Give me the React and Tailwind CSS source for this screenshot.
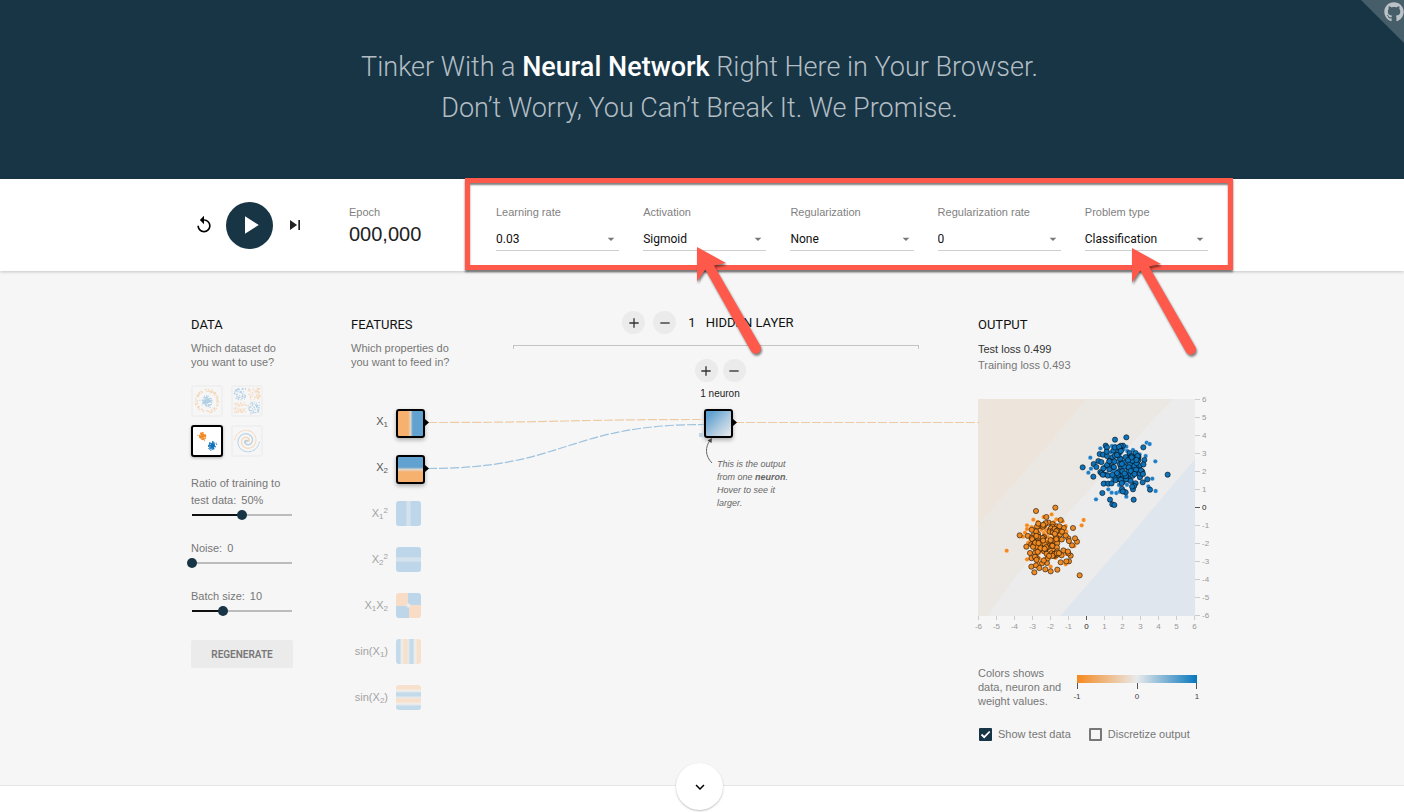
import React, { useState } from "react";
import {
  MdReplay,
  MdPlayArrow,
  MdSkipNext,
  MdAdd,
  MdRemove,
  MdArrowDropDown,
  MdKeyboardArrowDown,
} from "react-icons/md";
import { FaGithub } from "react-icons/fa";

const ORANGE = "#f08a24";
const BLUE = "#0f73b9";

function makeRandom(seed) {
  let s = seed;
  const next = () => {
    s = (s * 16807) % 2147483647;
    return s / 2147483647;
  };
  const normal = () =>
    Math.sqrt(-2 * Math.log(next())) * Math.cos(2 * Math.PI * next());
  return { next, normal };
}

/* ---------- Header ---------- */

function Header() {
  return (
    <header className="relative z-10 bg-[#183545] pt-[47px] pr-[5px] pb-[50px] shadow-[0_1px_4px_rgba(0,0,0,0.35)]">
      <h1 className="text-center text-[27px] leading-[41px] font-light text-[#b3bdc4] [font-family:Roboto,sans-serif]">
        Tinker With a <b className="font-medium text-white">Neural Network</b> Right Here in Your Browser.
        <br />
        Don’t Worry, You Can’t Break It. We Promise.
      </h1>
      <a
        href="#github"
        aria-label="Source on GitHub"
        className="absolute top-0 right-0 h-[43px] w-[43px] bg-[#465d6a] [clip-path:polygon(0_0,100%_0,100%_100%)]"
      >
        <FaGithub className="absolute top-0.5 right-0 h-5 w-5 text-[#bac2c7]" />
      </a>
    </header>
  );
}

/* ---------- Top controls ---------- */

const SELECTS = [
  { id: "rate", label: "Learning rate", options: ["0.03", "0.1", "0.3"] },
  { id: "activation", label: "Activation", options: ["Sigmoid", "ReLU", "Tanh", "Linear"] },
  { id: "reg", label: "Regularization", options: ["None", "L1", "L2"] },
  { id: "regrate", label: "Regularization rate", options: ["0", "0.001", "0.01"] },
  { id: "problem", label: "Problem type", options: ["Classification", "Regression"] },
];

function SelectField({ id, label, options }) {
  return (
    <div className="flex flex-col">
      <label htmlFor={id} className="text-[11px] leading-4 text-[#7f7f7f]">
        {label}
      </label>
      <div className="relative mt-2 border-b border-[#cfcfcf]">
        <select
          id={id}
          className="block h-[22px] w-full appearance-none bg-transparent text-xs text-[#111] [font-family:Roboto,sans-serif]"
        >
          {options.map((o) => (
            <option key={o}>{o}</option>
          ))}
        </select>
        <MdArrowDropDown className="pointer-events-none absolute top-[3px] right-0 h-4 w-4 text-[#777]" />
      </div>
    </div>
  );
}

const ARROW =
  "M0 0L29 16L17 18.500L63.300 98.700A5.300 5.300 0 0 1 54 104L8.300 22.500L0 34.500Z";

function Annotations() {
  return (
    <div aria-hidden="true" className="pointer-events-none absolute inset-0 z-20">
      <div className="absolute -top-px -right-[25px] bottom-px left-[274px] border-[5px] border-[#ff594b] shadow-[0_2px_2px_rgba(0,0,0,0.55),inset_0_2px_2px_rgba(0,0,0,0.5)]" />
      <svg
        width="1020"
        height="190"
        className="absolute top-0 left-0 overflow-visible drop-shadow-[1px_2px_1px_rgba(0,0,0,0.5)]"
      >
        <g fill="#ff594b">
          <path d={ARROW} transform="translate(506 68)" />
          <path d={ARROW} transform="translate(941 69)" />
        </g>
      </svg>
    </div>
  );
}

function TopControls() {
  return (
    <section className="relative z-10 bg-white pr-[5px] shadow-[0_1px_3px_rgba(0,0,0,0.2)]">
      <div className="relative mx-auto grid h-[92px] max-w-[1017px] grid-cols-[158px_147px_1fr]">
        <div className="flex items-center gap-3 pl-[3px]">
          <button type="button" aria-label="Reset the network">
            <MdReplay className="h-5 w-5" />
          </button>
          <button
            type="button"
            aria-label="Run"
            className="flex h-[47px] w-[47px] items-center justify-center rounded-full bg-[#183545] text-white"
          >
            <MdPlayArrow className="h-[30px] w-[30px]" />
          </button>
          <button type="button" aria-label="Step">
            <MdSkipNext className="h-5 w-5 text-[#222]" />
          </button>
        </div>
        <div className="pt-[25px]">
          <div className="text-[11px] leading-4 text-[#7f7f7f]">Epoch</div>
          <div className="mt-0.5 text-[20px] leading-6 text-[#222]">000,000</div>
        </div>
        <div className="grid grid-cols-5 gap-6 pt-[25px]">
          {SELECTS.map((s) => (
            <SelectField key={s.id} {...s} />
          ))}
        </div>
        <Annotations />
      </div>
    </section>
  );
}

/* ---------- Data column ---------- */

function datasetPoints(kind) {
  const { next, normal } = makeRandom(97);
  const pts = [];
  if (kind === "circle") {
    for (let i = 0; i < 110; i++) pts.push([14 + normal() * 2.6, 14 + normal() * 2.6, BLUE]);
    for (let i = 0; i < 110; i++) {
      const a = next() * 2 * Math.PI;
      const r = 9.5 + next() * 2.8;
      pts.push([14 + r * Math.cos(a), 14 + r * Math.sin(a), ORANGE]);
    }
  } else if (kind === "xor") {
    for (let i = 0; i < 230; i++) {
      const x = (next() - 0.5) * 24;
      const y = (next() - 0.5) * 24;
      pts.push([14 + x + Math.sign(x), 14 + y + Math.sign(y), x * y > 0 ? BLUE : ORANGE]);
    }
  } else if (kind === "gauss") {
    for (let i = 0; i < 90; i++) pts.push([9.5 + normal() * 1.7, 9 + normal() * 1.7, ORANGE]);
    for (let i = 0; i < 90; i++) pts.push([19 + normal() * 1.7, 19 + normal() * 1.7, BLUE]);
  } else {
    for (let i = 0; i < 90; i++) {
      const r = (i / 90) * 12.5;
      const t = (i / 90) * 11;
      pts.push([14 + r * Math.sin(t), 14 + r * Math.cos(t), ORANGE]);
      pts.push([14 - r * Math.sin(t), 14 - r * Math.cos(t), BLUE]);
    }
  }
  return pts;
}

const DATASETS = [
  { kind: "circle", name: "Circle" },
  { kind: "xor", name: "Exclusive or" },
  { kind: "gauss", name: "Gaussian" },
  { kind: "spiral", name: "Spiral" },
];

function DatasetButton({ kind, name, selected, onSelect }) {
  return (
    <button
      type="button"
      aria-label={name}
      aria-pressed={selected}
      onClick={onSelect}
      className={
        selected
          ? "h-8 w-8 rounded-[3px] border-2 border-black bg-white shadow-[0_1px_3px_rgba(0,0,0,0.3)]"
          : "h-8 w-8 rounded-[3px] border-2 border-[#f0f0f0]"
      }
    >
      <svg viewBox="0 0 28 28" className={selected ? "h-7 w-7" : "h-7 w-7 opacity-30"}>
        {datasetPoints(kind).map(([x, y, c], i) => (
          <circle key={i} cx={x} cy={y} r="0.6" fill={c} />
        ))}
      </svg>
    </button>
  );
}

function Slider({ id, lead, label, shown, min, max, initial }) {
  const [value, setValue] = useState(initial);
  const pct = ((value - min) / (max - min)) * 100;
  return (
    <div className="flex flex-col gap-px">
      <label htmlFor={id} className="text-[11px] leading-[17px] text-[#777]">
        {lead && <span className="block">{lead}</span>}
        <span className="flex gap-[5px]">
          <span>{label}</span>
          <span>{shown(value)}</span>
        </span>
      </label>
      <input
        id={id}
        type="range"
        min={min}
        max={max}
        value={value}
        onChange={(e) => setValue(Number(e.target.value))}
        style={{
          background: `linear-gradient(to right, #111 ${pct}%, #bcbcbc ${pct}%) center / 100px 2px no-repeat`,
        }}
        className="-ml-1 h-2.5 w-[110px] appearance-none [&::-webkit-slider-thumb]:h-2.5 [&::-webkit-slider-thumb]:w-2.5 [&::-webkit-slider-thumb]:appearance-none [&::-webkit-slider-thumb]:rounded-full [&::-webkit-slider-thumb]:bg-[#183545]"
      />
    </div>
  );
}

function ColumnTitle({ title, children }) {
  return (
    <>
      <h2 className="text-[13px] leading-5 text-[#111] [font-family:Roboto,sans-serif]">{title}</h2>
      <p className="mt-1.5 text-[11px] leading-[14px] text-[#777]">{children}</p>
    </>
  );
}

function DataColumn() {
  const [selected, setSelected] = useState("gauss");
  return (
    <div className="w-[102px]">
      <ColumnTitle title="DATA">
        Which dataset do
        <br />
        you want to use?
      </ColumnTitle>
      <div className="mt-4 grid w-[72px] grid-cols-2 gap-2">
        {DATASETS.map((d) => (
          <DatasetButton
            key={d.kind}
            {...d}
            selected={selected === d.kind}
            onSelect={() => setSelected(d.kind)}
          />
        ))}
      </div>
      <div className="mt-[18px] flex flex-col gap-5">
        <Slider
          id="ratio"
          lead="Ratio of training to"
          label="test data:"
          shown={(v) => `${v}%`}
          min={0}
          max={100}
          initial={50}
        />
        <Slider id="noise" label="Noise:" shown={(v) => v} min={0} max={50} initial={0} />
        <Slider id="batch" label="Batch size:" shown={(v) => v} min={1} max={30} initial={10} />
      </div>
      <button
        type="button"
        className="mt-6 h-7 w-full rounded-xs bg-[#ebebeb] text-[10px] font-semibold text-[#777] [font-family:Roboto,sans-serif]"
      >
        REGENERATE
      </button>
    </div>
  );
}

/* ---------- Features column ---------- */

const Sub = ({ children }) => <sub className="text-[8px]">{children}</sub>;
const Sup = ({ children }) => <sup className="text-[8px]">{children}</sup>;

const FEATURES = [
  {
    name: "X1",
    label: <>X<Sub>1</Sub></>,
    active: true,
    fill: "bg-[linear-gradient(to_right,#f6b16f_42%,#e0d5c8_50%,#62a2d0_58%)]",
  },
  {
    name: "X2",
    label: <>X<Sub>2</Sub></>,
    active: true,
    fill: "bg-[linear-gradient(to_bottom,#62a2d0_42%,#e0d5c8_50%,#f6b16f_58%)]",
  },
  {
    name: "X1 squared",
    label: <>X<Sub>1</Sub><Sup>2</Sup></>,
    fill: "bg-[linear-gradient(to_right,#bed6ea_38%,#d3e2ec_44%,#d3e2ec_56%,#bed6ea_62%)]",
  },
  {
    name: "X2 squared",
    label: <>X<Sub>2</Sub><Sup>2</Sup></>,
    fill: "bg-[linear-gradient(to_bottom,#bed6ea_38%,#d3e2ec_44%,#d3e2ec_56%,#bed6ea_62%)]",
  },
  {
    name: "X1 times X2",
    label: <>X<Sub>1</Sub>X<Sub>2</Sub></>,
    fill: "bg-[radial-gradient(circle,#e8ecee_6%,transparent_16%),conic-gradient(#bed6ea_25%,#f9dcc6_25%_50%,#bed6ea_50%_75%,#f9dcc6_75%)]",
  },
  {
    name: "sin X1",
    label: <>sin(X<Sub>1</Sub>)</>,
    fill: "bg-[linear-gradient(to_right,#c3daea_14%,#f0efed_24%,#f8e1cc_32%,#f8e1cc_42%,#e5e9ec_50%,#c3daea_58%,#c3daea_66%,#f0efed_76%,#f8e1cc_86%)]",
  },
  {
    name: "sin X2",
    label: <>sin(X<Sub>2</Sub>)</>,
    fill: "bg-[linear-gradient(to_bottom,#f8e1cc_14%,#f0efed_24%,#c3daea_32%,#c3daea_42%,#e5e9ec_50%,#f8e1cc_56%,#f8e1cc_66%,#f0efed_76%,#c3daea_86%)]",
  },
];

function FeaturesColumn() {
  return (
    <div>
      <ColumnTitle title="FEATURES">
        Which properties do
        <br />
        you want to feed in?
      </ColumnTitle>
      <ul className="mt-10">
        {FEATURES.map((f) => (
          <li key={f.name} className="grid h-[46px] grid-cols-[37px_28px] items-start gap-2">
            <span
              className={
                f.active
                  ? "text-right text-[11px] leading-6 whitespace-nowrap text-[#555]"
                  : "text-right text-[11px] leading-6 whitespace-nowrap text-[#a3a3a3]"
              }
            >
              {f.label}
            </span>
            <button
              type="button"
              aria-label={f.name}
              className={`${f.fill} ${
                f.active
                  ? "h-[29px] w-[29px] rounded-[3px] border-2 border-black bg-origin-border shadow-[0_2px_4px_rgba(0,0,0,0.3)]"
                  : "h-[25px] w-[25px] rounded-[3px]"
              }`}
            />
          </li>
        ))}
      </ul>
    </div>
  );
}

/* ---------- Hidden layers ---------- */

function RoundButton({ label, children }) {
  return (
    <button
      type="button"
      aria-label={label}
      className="flex h-[23px] w-[23px] items-center justify-center rounded-full bg-[#ebebeb] text-[#333]"
    >
      {children}
    </button>
  );
}

function HiddenLayers() {
  return (
    <div className="-mt-1 pr-[59px]">
      <div className="flex items-center justify-center gap-2 pr-4">
        <RoundButton label="Add hidden layer">
          <MdAdd className="h-4 w-4" />
        </RoundButton>
        <RoundButton label="Remove hidden layer">
          <MdRemove className="h-4 w-4" />
        </RoundButton>
        <div className="ml-1 flex gap-2.5 text-[13px] leading-5 text-[#111] [font-family:Roboto,sans-serif]">
          <span>1</span>
          <h2>HIDDEN LAYER</h2>
        </div>
      </div>
      <div className="mt-[11px] h-1 border-x border-t border-[#c4c4c4]" />
      <div className="mt-2.5 flex flex-col items-center pl-1">
        <div className="flex gap-[5px] pl-1">
          <RoundButton label="Add neuron">
            <MdAdd className="h-4 w-4" />
          </RoundButton>
          <RoundButton label="Remove neuron">
            <MdRemove className="h-4 w-4" />
          </RoundButton>
        </div>
        <div className="mt-1 pl-1 text-[10px] leading-4 text-[#222]">1 neuron</div>
        <div className="mt-[7px] h-[29px] w-[29px] rounded-[3px] border-2 border-black bg-[linear-gradient(135deg,#62a2d0_20%,#a9c8df_55%,#e4e8eb_90%)] bg-origin-border shadow-[0_2px_4px_rgba(0,0,0,0.3)]" />
      </div>
      <p className="mt-5 ml-[204px] text-[9px] leading-[13px] text-[#666] italic">
        <span className="block">This is the output</span>
        <span className="flex">
          <span className="whitespace-pre">from one </span>
          <b>neuron</b>
          <span>.</span>
        </span>
        <span className="block">Hover to see it</span>
        <span className="block">larger.</span>
      </p>
    </div>
  );
}

function Links() {
  return (
    <svg
      aria-hidden="true"
      width="800"
      height="240"
      className="pointer-events-none absolute top-px left-0"
      fill="none"
    >
      <g strokeWidth="1.2" strokeDasharray="9 2">
        <path d="M237 150.500C375 150.500 375 147.500 513 147.500" stroke="#edcba4" />
        <path d="M237 196.500C375 196.500 375 152.500 513 152.500" stroke="#9dc2de" />
        <path d="M544 150.500H788" stroke="#edcba4" />
      </g>
      <g fill="#000">
        <path d="M234 147l4 3.500l-4 3.500z" />
        <path d="M234 193l4 3.500l-4 3.500z" />
        <path d="M542 147l4 3.500l-4 3.500z" />
      </g>
      <rect x="508" y="161" width="4" height="4" fill="#bdd5e4" />
      <path d="M521 191C514 184 514 175 519 168.500" stroke="#666" />
      <path d="M521 166l-4.500 2.500l4 2.500z" fill="#444" />
    </svg>
  );
}

/* ---------- Output column ---------- */

const BLUE_TEST = [
  [466, 179], [500, 172], [369, 262], [401, 290], [624, 284], [571, 329], [522, 359], [428, 339],
  [451, 359], [458, 373], [464, 375], [551, 202], [438, 197], [442, 202], [484, 200], [490, 197],
  [461, 212], [420, 222], [416, 243], [402, 252], [410, 261], [422, 276], [432, 311], [446, 311],
  [549, 307], [563, 298], [541, 291], [554, 240], [540, 258], [548, 275], [520, 328], [498, 337],
  [528, 219], [510, 219], [430, 224], [442, 228], [458, 232], [520, 233], [534, 240], [518, 250],
];
const BLUE_TRAIN = [
  [561, 188], [570, 192], [392, 233], [587, 244], [588, 333], [578, 296], [386, 278], [409, 358],
  [566, 319], [540, 223], [558, 228], [394, 266], [446, 328], [456, 338], [470, 339], [500, 350],
  [500, 200], [422, 205], [480, 335], [520, 210],
];
const ORANGE_TEST = [
  [287, 383], [229, 393], [180, 466], [340, 444], [360, 586], [303, 420], [260, 411], [267, 428],
  [352, 485], [346, 475], [326, 475], [200, 500], [215, 560], [229, 556], [224, 577], [239, 564],
  [257, 568], [273, 574], [293, 569], [328, 544], [303, 547], [237, 439], [290, 439], [333, 527],
  [337, 496], [326, 520], [221, 466], [211, 519], [250, 440], [303, 444], [235, 462], [228, 534],
  [262, 549], [283, 528], [215, 493], [320, 544],
];
const ORANGE_TRAIN = [
  [141, 512], [372, 420], [366, 436], [221, 419], [276, 403], [202, 538], [318, 553], [318, 438],
  [290, 418], [202, 436], [190, 470], [252, 411], [215, 441], [320, 455], [196, 458], [202, 447],
  [309, 424], [273, 560], [344, 498], [212, 480],
];

function clusterFill(seed, cx, cy, sx, sy, count) {
  const { normal } = makeRandom(seed);
  const pts = [];
  while (pts.length < count) {
    const a = normal();
    const b = normal();
    if (a * a + b * b < 3.6) pts.push([cx + a * sx, cy + b * sy]);
  }
  return pts;
}

const SERIES = [
  { color: "#1f7dc4", test: false, points: [...BLUE_TRAIN, ...clusterFill(11, 485, 262, 38, 38, 70)] },
  { color: "#f5891f", test: false, points: [...ORANGE_TRAIN, ...clusterFill(23, 262, 487, 37, 36, 70)] },
  { color: "#0f73b9", test: true, points: [...BLUE_TEST, ...clusterFill(37, 488, 266, 36, 38, 85)] },
  { color: "#ee8a23", test: true, points: [...ORANGE_TEST, ...clusterFill(53, 265, 492, 37, 36, 90)] },
];

const TICKS = [-6, -5, -4, -3, -2, -1, 0, 1, 2, 3, 4, 5, 6];

function Heatmap() {
  return (
    <svg
      role="img"
      aria-label="Output heat map"
      width="240"
      height="235"
      viewBox="0 0 240 235"
      className="mt-[26px] block overflow-visible"
    >
      <rect width="217" height="217" fill="#ececec" />
      <path d="M0 0H195.500L170 26C120 84 60 140 10 217H0Z" fill="#ebe8e3" />
      <path d="M0 0H109L64 53L0 126Z" fill="#ede4dc" />
      <path d="M217 60V217H82L140 151Z" fill="#dfe6ed" />
      {SERIES.map((s, i) => (
        <g
          key={i}
          fill={s.color}
          stroke={s.test ? "#000" : "#fff"}
          strokeOpacity={s.test ? 0.6 : 0.5}
          strokeWidth={s.test ? 0.9 : 0.5}
        >
          {s.points.map(([x, y], j) => (
            <circle key={j} cx={(x - 55) / 3} cy={(y - 57) / 3} r={s.test ? 2.6 : 2.2} />
          ))}
        </g>
      ))}
      <g fontSize="8" className="[font-family:'Liberation_Sans',sans-serif]">
        {TICKS.map((t) => {
          const p = (t + 6) * 18 + 0.5;
          const ink = t === 0 ? "#222" : "#999";
          const line = t === 0 ? "#555" : "#ccc";
          return (
            <g key={t} fill={ink}>
              <path d={`M${p} 217v4`} stroke={line} />
              <text x={p} y="230" textAnchor="middle">{t}</text>
              <path d={`M217 ${217 - p}h5`} stroke={line} />
              <text x="224" y={219 - p}>{t}</text>
            </g>
          );
        })}
      </g>
    </svg>
  );
}

function Check({ id, label, defaultChecked }) {
  return (
    <div className="flex items-center gap-1.5">
      <span className="relative flex">
        <input
          id={id}
          type="checkbox"
          defaultChecked={defaultChecked}
          className="peer h-[13px] w-[13px] appearance-none rounded-[1px] border-2 border-[#777] checked:border-[#183545] checked:bg-[#183545]"
        />
        <svg
          viewBox="0 0 13 13"
          className="pointer-events-none absolute inset-0 hidden h-[13px] w-[13px] peer-checked:block"
        >
          <path d="M2.500 6.500L5.200 9.200L10.700 3.500" fill="none" stroke="#fff" strokeWidth="1.8" />
        </svg>
      </span>
      <label htmlFor={id} className="text-[11px] leading-4 whitespace-nowrap text-[#777]">
        {label}
      </label>
    </div>
  );
}

function OutputColumn() {
  return (
    <div>
      <h2 className="text-[13px] leading-5 text-[#111] [font-family:Roboto,sans-serif]">OUTPUT</h2>
      <div className="mt-1.5 text-[11px] leading-4 text-[#333]">Test loss 0.499</div>
      <div className="text-[11px] leading-4 text-[#777]">Training loss 0.493</div>
      <Heatmap />
      <div className="mt-8 flex gap-3">
        <p className="w-[84px] text-[11px] leading-[14px] whitespace-nowrap text-[#777]">
          Colors shows
          <br />
          data, neuron and
          <br />
          weight values.
        </p>
        <svg width="130" height="42" className="overflow-visible" role="img" aria-label="Color scale">
          <defs>
            <linearGradient id="scale">
              <stop offset="0" stopColor="#f5891f" />
              <stop offset="0.5" stopColor="#e8eaeb" />
              <stop offset="1" stopColor="#0877bd" />
            </linearGradient>
          </defs>
          <rect x="3" y="9" width="120" height="8" fill="url(#scale)" />
          <path d="M3.500 17v6M63.500 17v6M122.500 17v6" stroke="#555" />
          <g fontSize="8" fill="#444" textAnchor="middle" className="[font-family:'Liberation_Sans',sans-serif]">
            <text x="3" y="33">-1</text>
            <text x="63" y="33">0</text>
            <text x="123" y="33">1</text>
          </g>
        </svg>
      </div>
      <div className="mt-[18px] flex gap-[18px] pl-px">
        <Check id="show-test" label="Show test data" defaultChecked />
        <Check id="discretize" label="Discretize output" />
      </div>
    </div>
  );
}

/* ---------- Page ---------- */

export default function App() {
  return (
    <div className="flex min-h-screen flex-col bg-white [font-family:'Liberation_Sans',Arial,sans-serif]">
      <Header />
      <TopControls />
      <main className="border-b border-[#e6e6e6] bg-[#f6f6f6] pr-[5px] pb-[43px]">
        <div className="relative mx-auto grid max-w-[1017px] grid-cols-[160px_162px_1fr_230px] pt-11">
          <DataColumn />
          <FeaturesColumn />
          <HiddenLayers />
          <OutputColumn />
          <Links />
        </div>
      </main>
      <footer className="flex justify-center pr-[5px]">
        <button
          type="button"
          aria-label="Scroll to the article"
          className="z-10 -mt-[23px] flex h-[47px] w-[47px] items-center justify-center rounded-full bg-white shadow-[0_1px_2px_rgba(0,0,0,0.25)]"
        >
          <MdKeyboardArrowDown className="h-[18px] w-[18px] text-black" />
        </button>
      </footer>
    </div>
  );
}
